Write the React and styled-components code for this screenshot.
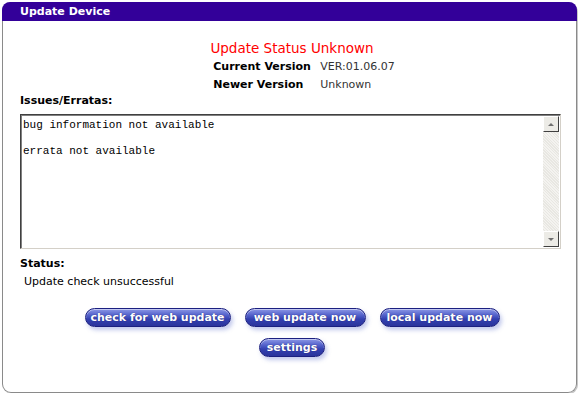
import React from 'react';
import styled, { createGlobalStyle } from 'styled-components';

const GlobalStyle = createGlobalStyle`
  html, body {
    margin: 0;
    padding: 0;
    background: #ffffff;
  }
  body {
    font-family: "DejaVu Sans", Verdana, sans-serif;
  }
`;

function App() {
  return (
    <>
      <GlobalStyle />
      <Panel>
        <Header>Update Device</Header>
        <Body>
          <Summary>
            <StatusTitle>Update Status Unknown</StatusTitle>
            <VersionGrid>
              <Label>Current Version</Label>
              <Value>VER:01.06.07</Value>
              <Label>Newer Version</Label>
              <Value>Unknown</Value>
            </VersionGrid>
          </Summary>
          <SectionLabel>Issues/Erratas:</SectionLabel>
          <TextBox>
            <TextContent>
              <div>bug information not available</div>
              <div>&nbsp;</div>
              <div>errata not available</div>
            </TextContent>
            <Scrollbar>
              <ScrollButton>
                <Arrow $up />
              </ScrollButton>
              <Track />
              <ScrollButton>
                <Arrow />
              </ScrollButton>
            </Scrollbar>
          </TextBox>
          <SectionLabel $top={8}>Status:</SectionLabel>
          <StatusText>Update check unsuccessful</StatusText>
          <ButtonRow>
            <PillButton $w={146}>check for web update</PillButton>
            <PillButton $w={121}>web update now</PillButton>
            <PillButton $w={120}>local update now</PillButton>
          </ButtonRow>
          <ButtonRow $top={11}>
            <PillButton $w={66}>settings</PillButton>
          </ButtonRow>
        </Body>
      </Panel>
    </>
  );
}

const Panel = styled.div`
  margin: 2px 3px 0 2px;
  height: 391px;
  border: 1px solid #8a8a8a;
  border-top: none;
  border-radius: 9px;
  box-sizing: border-box;
  display: flex;
  flex-direction: column;
  box-shadow: 1px 1px 0 #c8c8c8;
`;

const Header = styled.div`
  height: 19px;
  background: #330099;
  border-radius: 8px 8px 0 0;
  margin: 0 -1px;
  color: #ffffff;
  font-size: 11px;
  font-weight: bold;
  line-height: 19px;
  padding-left: 18px;
`;

const Body = styled.div`
  display: flex;
  flex-direction: column;
  padding: 0 14px 0 17px;
`;

const Summary = styled.div`
  display: flex;
  flex-direction: column;
  align-items: center;
  padding-top: 19px;
`;

const StatusTitle = styled.div`
  color: #ff0000;
  font-size: 13.5px;
  line-height: 16px;
  margin-left: 2px;
`;

const VersionGrid = styled.div`
  display: grid;
  grid-template-columns: 107px auto;
  row-gap: 2px;
  margin-top: 3px;
  margin-left: 26px;
  font-size: 11px;
  line-height: 16px;
`;

const Label = styled.div`
  font-weight: bold;
  color: #000000;
`;

const Value = styled.div`
  color: #333333;
`;

const SectionLabel = styled.div`
  font-size: 11px;
  font-weight: bold;
  line-height: 14px;
  margin-top: ${p => p.$top || 1}px;
  color: #000000;
`;

const TextBox = styled.div`
  display: flex;
  margin-top: 6px;
  height: 135px;
  width: 541px;
  box-sizing: border-box;
  border-top: 1px solid #404040;
  border-left: 1px solid #404040;
  border-right: 1px solid #d4d0c8;
  border-bottom: 1px solid #d4d0c8;
  box-shadow: inset 1px 1px 0 #808080;
`;

const TextContent = styled.div`
  flex: 1;
  font-family: "Liberation Mono", "Courier New", monospace;
  font-size: 11px;
  line-height: 13px;
  color: #000000;
  padding: 4px 2px;
`;

const Scrollbar = styled.div`
  width: 16px;
  display: flex;
  flex-direction: column;
  margin: 1px 1px 1px 0;
`;

const ScrollButton = styled.div`
  height: 14px;
  display: flex;
  align-items: center;
  justify-content: center;
  background: #ecebe6;
  border-top: 1px solid #ffffff;
  border-left: 1px solid #ffffff;
  border-right: 1px solid #404040;
  border-bottom: 1px solid #404040;
`;

const Arrow = styled.div`
  width: 0;
  height: 0;
  border-left: 3px solid transparent;
  border-right: 3px solid transparent;
  ${p => (p.$up ? 'border-bottom: 3px solid #707070;' : 'border-top: 3px solid #707070;')}
`;

const Track = styled.div`
  flex: 1;
  background-color: #eeede9;
  background-image: repeating-linear-gradient(45deg, #f4f3f0 0 1px, #e8e7e2 1px 2px);
`;

const StatusText = styled.div`
  font-size: 11px;
  line-height: 14px;
  margin-top: 4px;
  margin-left: 4px;
  color: #000000;
`;

const ButtonRow = styled.div`
  display: flex;
  justify-content: center;
  gap: 14px;
  margin-top: ${p => p.$top || 19}px;
  margin-left: 2px;
`;

const PillButton = styled.button`
  width: ${p => p.$w}px;
  font-family: "DejaVu Sans", Verdana, sans-serif;
  font-size: 11px;
  font-weight: bold;
  color: #ffffff;
  height: 19px;
  padding: 0;
  border: 1px solid #1c2080;
  border-radius: 10px;
  background: linear-gradient(to bottom, #8c98e6 0%, #5563cc 35%, #3340b0 60%, #2a349c 100%);
  box-shadow: 2px 3px 4px rgba(80, 100, 200, 0.35), inset 0 1px 0 rgba(255, 255, 255, 0.5);
  text-shadow: 0 0 1px #1a1f70;
  line-height: 16px;
  white-space: nowrap;
  cursor: pointer;
`;

export default App;
